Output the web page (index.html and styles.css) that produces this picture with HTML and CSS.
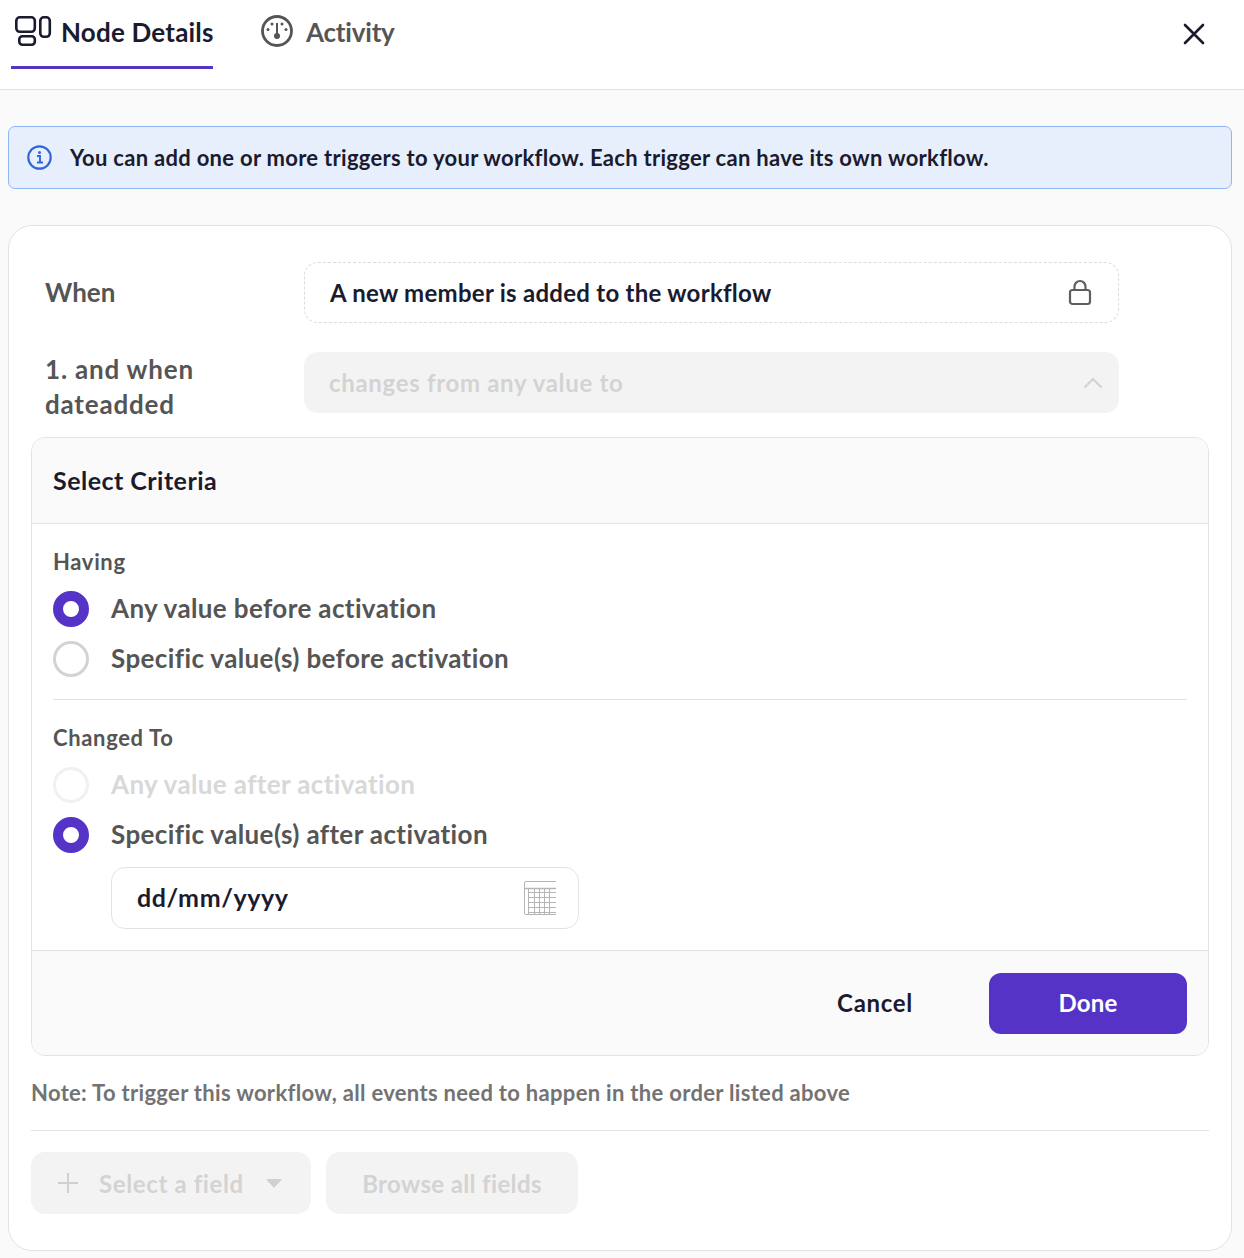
FILE: index.html
```html
<!DOCTYPE html>
<html lang="en">
<head>
<meta charset="utf-8">
<title>Node Details</title>
<link rel="stylesheet" href="styles.css">
</head>
<body>
<header class="topbar">
  <nav class="tabs">
    <div class="tab tab-active">
      <svg class="tab-icon" width="38" height="32" viewBox="0 0 38 32" fill="none" stroke="#1b1b2f" stroke-width="2.6">
        <rect x="2.300" y="2.300" width="18.500" height="14.500" rx="3.500"/>
        <rect x="5.300" y="21.300" width="15.500" height="8.500" rx="3"/>
        <rect x="26.300" y="2.300" width="9.500" height="19.500" rx="3.500"/>
      </svg>
      <span>Node Details</span>
    </div>
    <div class="tab tab-plain">
      <svg class="tab-icon" width="32" height="32" viewBox="0 0 32 32" fill="none" stroke="#555" stroke-width="2.800">
        <circle cx="16" cy="16" r="14.500"/>
        <path d="M16 8v12" stroke-width="2"/>
        <circle cx="16" cy="21" r="3" fill="#555" stroke="none"/>
        <circle cx="7" cy="14.500" r="1.500" fill="#555" stroke="none"/>
        <circle cx="25" cy="14.500" r="1.500" fill="#555" stroke="none"/>
        <circle cx="11" cy="9" r="1.500" fill="#555" stroke="none"/>
        <circle cx="21" cy="9" r="1.500" fill="#555" stroke="none"/>
      </svg>
      <span>Activity</span>
    </div>
  </nav>
  <svg class="close" width="22" height="22" viewBox="0 0 22 22" fill="none" stroke="#1b1b2f" stroke-width="2.600" stroke-linecap="round">
    <path d="M2 2l18 18M20 2L2 20"/>
  </svg>
</header>
<main class="content">
  <div class="alert">
    <svg width="25" height="25" viewBox="0 0 25 25" fill="none" stroke="#2f66d8" stroke-width="2.200">
      <circle cx="12.500" cy="12.500" r="11.200"/>
      <path d="M10 11h3v6.500M10 17.500h6" stroke-width="1.900"/>
      <circle cx="12.500" cy="7.400" r="1.500" fill="#2f66d8" stroke="none"/>
    </svg>
    <span>You can add one or more triggers to your workflow. Each trigger can have its own workflow.</span>
  </div>
  <section class="card">
    <div class="row row-when">
      <div class="row-label">When</div>
      <div class="field field-locked">
        <span>A new member is added to the workflow</span>
        <svg width="24" height="27" viewBox="0 0 24 27" fill="none" stroke="#5f5f5f" stroke-width="2.200">
          <rect x="2" y="11" width="20" height="14" rx="2.500"/>
          <path d="M6.500 11V7.500a5.500 5.500 0 0 1 11 0V11"/>
        </svg>
      </div>
    </div>
    <div class="row row-and">
      <div class="row-label row-label-two">1. and when dateadded</div>
      <div class="field field-disabled">
        <span>changes from any value to</span>
        <svg width="20" height="12" viewBox="0 0 20 12" fill="none" stroke="#d2d2d2" stroke-width="2.200">
          <path d="M1.500 10.500L10 2l8.500 8.500"/>
        </svg>
      </div>
    </div>
    <div class="criteria">
      <div class="criteria-head">Select Criteria</div>
      <div class="criteria-body">
        <div class="group group-having">
          <div class="group-title">Having</div>
          <div class="radio-row"><span class="radio radio-on"></span><span class="radio-text">Any value before activation</span></div>
          <div class="radio-row"><span class="radio"></span><span class="radio-text">Specific value(s) before activation</span></div>
        </div>
        <div class="group">
          <div class="group-title">Changed To</div>
          <div class="radio-row radio-row-off"><span class="radio radio-off"></span><span class="radio-text">Any value after activation</span></div>
          <div class="radio-row"><span class="radio radio-on"></span><span class="radio-text">Specific value(s) after activation</span></div>
          <div class="date-field">
            <span>dd/mm/yyyy</span>
            <svg width="32" height="34" viewBox="0 0 32 34" fill="none" stroke="#b5b5b5" stroke-width="1">
              <path d="M32 .5H2A1.500 1.500 0 0 0 .5 2v30A1.500 1.500 0 0 0 2 33.500h30"/>
              <path d="M.5 7.500H32" stroke-width="1.500"/>
              <path d="M4 11.500H32M4 16.500H32M4 21.500H32M4 26.500H32M4 31.500H32M4.500 8V33M10.500 8V33M15.500 8V33M20.500 8V33M25.500 8V33"/>
            </svg>
          </div>
        </div>
      </div>
      <div class="criteria-foot">
        <span class="btn-cancel">Cancel</span>
        <span class="btn-done">Done</span>
      </div>
    </div>
    <p class="note">Note: To trigger this workflow, all events need to happen in the order listed above</p>
    <div class="actions">
      <div class="btn-off btn-select">
        <svg width="22" height="22" viewBox="0 0 22 22" fill="none" stroke="#d0d0d0" stroke-width="2"><path d="M11 1v20M1 11h20"/></svg>
        <span>Select a field</span>
        <svg class="caret" width="16" height="9" viewBox="0 0 16 9" fill="#d0d0d0"><path d="M1 0h14q1 0 .4 1L8.800 8q-.8 1-1.600 0L.6 1Q0 0 1 0z"/></svg>
      </div>
      <div class="btn-off btn-browse">Browse all fields</div>
    </div>
  </section>
</main>
</body>
</html>
```
FILE: styles.css
```css
* { box-sizing: border-box; }
html, body { margin: 0; padding: 0; }
body {
  width: 1244px;
  height: 1258px;
  overflow: hidden;
  background: #fafafa;
  color: #1b1b2f;
  font-family: "Lato", "Liberation Sans", sans-serif;
  font-weight: 700;
  font-size: 24px;
}
.topbar {
  height: 90px;
  background: #fff;
  border-bottom: 1px solid #e3e3e3;
  display: flex;
  justify-content: space-between;
  padding: 0 39px 0 11px;
}
.tabs { display: flex; gap: 45px; height: 69px; }
.tab {
  display: flex;
  align-items: center;
  gap: 10px;
  padding: 0 0 2px 3px;
  color: #555;
  font-size: 26px;
  font-weight: 700;
  white-space: nowrap;
  border-bottom: 3px solid transparent;
}
.tab-icon { margin-bottom: 2px; flex: none; }
.tab-active { color: #1b1b2f; border-bottom-color: #5533c7; width: 202px; gap: 9px; letter-spacing: 0.2px; }
.tab-plain { gap: 13px; letter-spacing: -0.2px; }
.close { margin-top: 23px; }
.content { padding: 36px 12px 0 8px; }
.alert {
  height: 63px;
  display: flex;
  align-items: center;
  gap: 18px;
  padding: 0 18px;
  background: #e7effc;
  border: 1px solid #8fb6f4;
  border-radius: 7px;
  font-size: 22px;
  letter-spacing: 0.29px;
}
.card {
  margin-top: 36px;
  height: 1026px;
  background: #fff;
  border: 1px solid #e3e3e3;
  border-radius: 24px;
  padding: 36px 22px 0;
}
.row { display: flex; }
.row-when { height: 61px; align-items: center; }
.row-and { height: 86px; margin-top: 29px; }
.row-label { width: 273px; padding: 0 0 2px 14px; color: #555; font-size: 26px; }
.row-label-two { line-height: 35px; padding: 0 60px 0 14px; letter-spacing: 0.8px; }
.field {
  width: 815px;
  height: 61px;
  border-radius: 14px;
  padding: 0 26px;
  display: flex;
  align-items: center;
  justify-content: space-between;
}
.field-locked { border: 1px dashed #dcdcdc; padding: 0 26px 0 25px; font-size: 24px; letter-spacing: 0.27px; }
.field-disabled { background: #f3f3f3; color: #d3d3d3; padding: 0 16px 0 25px; font-size: 24px; letter-spacing: 0.68px; }
.criteria {
  margin-top: -1px;
  height: 619px;
  border: 1px solid #e3e3e3;
  border-radius: 14px;
  overflow: hidden;
  display: flex;
  flex-direction: column;
}
.criteria-head {
  height: 86px;
  flex: none;
  display: flex;
  align-items: center;
  padding: 0 21px 2px;
  background: #fafafa;
  border-bottom: 1px solid #e3e3e3;
  font-size: 25px;
  letter-spacing: 0.47px;
}
.criteria-body { flex: 1; padding: 0 21px; }
.group { padding-top: 22px; }
.group-having { height: 176px; border-bottom: 1px solid #e3e3e3; }
.group-title { color: #555; font-size: 22px; height: 38px; line-height: 32px; letter-spacing: 0.65px; }
.radio-row {
  display: flex;
  align-items: center;
  gap: 22px;
  height: 50px;
  color: #555;
  font-size: 26px;
  letter-spacing: 0.38px;
}
.radio-text { padding-bottom: 2px; }
.radio-row-off { color: #d8d8d8; }
.radio {
  width: 36px;
  height: 36px;
  flex: none;
  border-radius: 50%;
  border: 3px solid #d3d3d3;
  background: #fff;
}
.radio-on { border: 10px solid #5533c7; }
.radio-off { border-color: #f1f1f1; }
.date-field {
  margin: 7px 0 0 58px;
  width: 468px;
  height: 62px;
  border: 1px solid #e3e3e3;
  border-radius: 14px;
  padding: 0 22px 0 25px;
  display: flex;
  align-items: center;
  justify-content: space-between;
  font-size: 25px;
  letter-spacing: 0.6px;
}
.date-field span { padding-bottom: 2px; }
.criteria-foot {
  height: 105px;
  flex: none;
  background: #fafafa;
  border-top: 1px solid #e3e3e3;
  display: flex;
  align-items: flex-start;
  justify-content: flex-end;
  gap: 76px;
  padding: 22px 21px 0 0;
}
.btn-cancel { letter-spacing: 0.7px; line-height: 59px; }
.btn-done {
  width: 198px;
  height: 61px;
  padding-bottom: 2px;
  border-radius: 12px;
  background: #5533c7;
  color: #fff;
  display: flex;
  align-items: center;
  justify-content: center;
  letter-spacing: 0.2px;
}
.note {
  margin: 0;
  height: 75px;
  padding-top: 23px;
  border-bottom: 1px solid #e3e3e3;
  color: #737373;
  font-size: 22px;
  letter-spacing: 0.31px;
}
.actions { display: flex; gap: 15px; margin-top: 21px; }
.btn-off {
  height: 62px;
  border-radius: 14px;
  background: #f3f3f3;
  color: #d3d3d3;
  display: flex;
  align-items: center;
}
.btn-select { width: 280px; padding-left: 26px; gap: 20px; letter-spacing: 0.62px; }
.caret { margin-left: 2px; }
.btn-browse { width: 252px; justify-content: center; letter-spacing: 0.35px; }
```
